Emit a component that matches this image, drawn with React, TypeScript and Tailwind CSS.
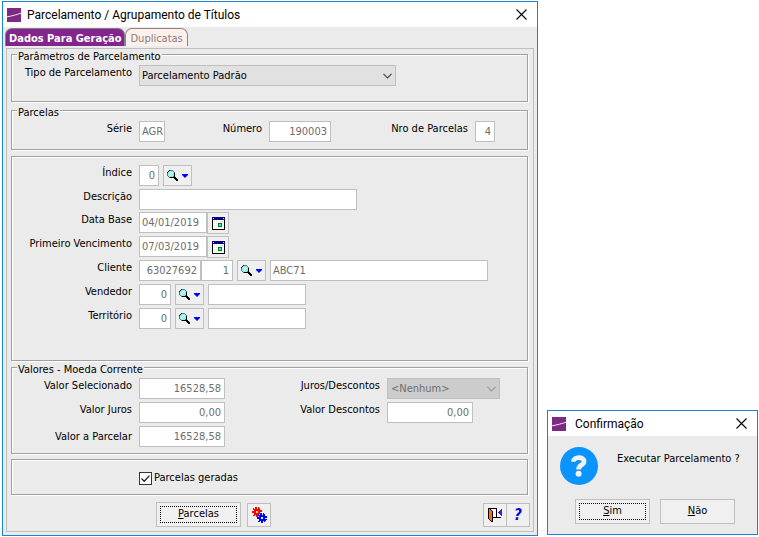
import type { ReactNode } from "react";

const FIELD = "h-[21px] border border-[#bfbfbf] bg-white text-[#6d6d6d] outline-none";
const TOOL_BUTTON = "flex items-center justify-center border border-[#bfbfbf] bg-[#f0f0f0]";

// Pixel maps for the small toolbar icons, one character per pixel
const PALETTE: Record<string, string> = {
  k: "#000000",
  c: "#8ff0f0",
  w: "#ffffff",
  g: "#4f8080",
  l: "#e4e4e4",
  n: "#000080",
  y: "#ffff00",
  b: "#0000ff",
  r: "#ff0000",
  o: "#ff6a13",
  v: "#4a14e8",
  d: "#008000",
  a: "#00ffff",
};

const MAGNIFIER = [
  "..kggg.....",
  ".kccccg....",
  "kcwcwccg...",
  "gccwcwck...",
  "gcwcwcck...",
  "gccwccck...",
  ".gccccgk...",
  "..gkkkkkk..",
  ".......kkk.",
  "........kkk",
  ".........kk",
];

const CALENDAR = [
  "nnnnnnnnnnnnn",
  "nynnnnnnnnnyn",
  "nnnnnnnnnnnnn",
  "kwwwwwwwwwwwk",
  "kwlwlwlwlwlwk",
  "kwwwwwwwwwwwk",
  "kwlwlwddddwwk",
  "kwwwwwdaadwwk",
  "kwlwlwdaadwwk",
  "kwwwwwddddwwk",
  "kwlwlwlwlwlwk",
  "kwwwwwwwwwwwk",
  "kkkkkkkkkkkkk",
];

const GEARS = [
  "...rr.r........",
  ".r.rr.rr.......",
  ".rrrrrrr.......",
  "..rrrrrrrr.....",
  "rrrryyrrrr.....",
  "rrrryyrr.......",
  "..rrrrrrbb.b...",
  "..rrrrb.bb.bb..",
  ".rr.rrbbbbbbb..",
  "....rr.bbbbbbbb",
  ".....bbbbyybbbb",
  ".....bbbbyybb..",
  ".......bbbbbbbb",
  ".......bbbbbbb.",
  "......bb.bb.b..",
  ".........bb....",
];

const DOOR = [
  "kkkkkkkkk.....",
  "kokwwwwwk....v",
  "kookwwwwk...vv",
  "koookwwwk..vvv",
  "koookwwwk.vvvv",
  "koookwwwk..vvv",
  "koookwwwk...vv",
  "koookwwwk....v",
  "koookwwwk.....",
  "koookkkkkkkkk.",
  "koook.........",
  ".kook.........",
  "..kok.........",
  "...kk.........",
];

function PixelIcon({ rows }: { rows: string[] }) {
  const width = rows[0].length;
  return (
    <svg width={width} height={rows.length} viewBox={`0 0 ${width} ${rows.length}`} shapeRendering="crispEdges" aria-hidden="true">
      {rows.flatMap((row, y) =>
        row.split("").map((ch, x) =>
          PALETTE[ch] ? <rect key={`${x}-${y}`} x={x} y={y} width="1" height="1" fill={PALETTE[ch]} /> : null
        )
      )}
    </svg>
  );
}

function Logo() {
  return (
    <svg width="14" height="14" viewBox="0 0 14 14" aria-hidden="true">
      <rect width="14" height="14" fill="#7d2a86" />
      <path d="M0 8.8 C5 8 10 6.6 14 5.2" stroke="#f3e4f5" strokeWidth="1" fill="none" />
    </svg>
  );
}

function TitleBar({ title, gap }: { title: string; gap: string }) {
  return (
    <header className={`flex h-[25px] items-center bg-white pl-1 pr-[10px] ${gap}`}>
      <Logo />
      <h1 className="flex-1 whitespace-nowrap font-[Roboto,'Open_Sans',sans-serif] text-[12px] leading-4 text-black">{title}</h1>
      <button type="button" aria-label="Fechar">
        <svg width="11" height="11" viewBox="0 0 11 11" fill="none" stroke="#000" strokeWidth="1.1">
          <path d="M0.5 0.5l10 10M10.5 0.5l-10 10" />
        </svg>
      </button>
    </header>
  );
}

function Group({ legend, className, children }: { legend?: string; className: string; children: ReactNode }) {
  return (
    <fieldset className={`min-w-0 border border-[#a0a0a0] shadow-[1px_1px_0_0_#fff,inset_1px_1px_0_0_#fff] ${className}`}>
      {legend && <legend className="ml-[5px] h-[11px] bg-[#ebebeb] px-px leading-[15px]">{legend}</legend>}
      {children}
    </fieldset>
  );
}

function Label({ id, width = "w-[120px]", children }: { id: string; width?: string; children: ReactNode }) {
  return (
    <label htmlFor={id} className={`mr-[7px] shrink-0 whitespace-nowrap text-right leading-[15px] ${width}`}>
      {children}
    </label>
  );
}

interface FieldProps {
  id?: string;
  value?: string;
  width: string;
  right?: boolean;
  label?: string;
}

function Field({ id, value = "", width, right, label }: FieldProps) {
  return (
    <input
      id={id}
      aria-label={label}
      defaultValue={value}
      readOnly
      className={`${FIELD} ${width} ${right ? "pr-[3px] text-right" : "pl-0.5"}`}
    />
  );
}

function SearchButton({ label }: { label: string }) {
  return (
    <button type="button" aria-label={label} className={`${TOOL_BUTTON} mx-1 h-[21px] w-[29px] shrink-0 gap-1`}>
      <PixelIcon rows={MAGNIFIER} />
      <svg width="6" height="4" viewBox="0 0 6 4" fill="#0000ff">
        <path d="M0 0h6v1L3 4L0 1z" />
      </svg>
    </button>
  );
}

function DateButton({ label }: { label: string }) {
  return (
    <button type="button" aria-label={label} className={`${TOOL_BUTTON} h-[22px] w-[22px] shrink-0`}>
      <PixelIcon rows={CALENDAR} />
    </button>
  );
}

interface ComboProps {
  id: string;
  option: string;
  width: string;
  disabled?: boolean;
}

function Combo({ id, option, width, disabled }: ComboProps) {
  return (
    <div className={`relative ${width}`}>
      <select
        id={id}
        disabled={disabled}
        className={`h-[21px] w-full appearance-none border border-[#bfbfbf] leading-[19px] opacity-100 ${
          disabled ? "bg-[#cccccc] px-[3px] text-[#6d6d6d]" : "bg-[#e1e1e1] px-0.5 text-black"
        }`}
      >
        <option>{option}</option>
      </select>
      <svg className="pointer-events-none absolute right-1 top-2" width="9" height="6" viewBox="0 0 9 6" fill="none" stroke={disabled ? "#9a9a9a" : "#444"} strokeWidth="1.2">
        <path d="M0.5 0.8l4 4l4-4" />
      </svg>
    </div>
  );
}

function PushButton({ hotkey, rest, focused, width }: { hotkey: string; rest: string; focused?: boolean; width: string }) {
  return (
    <button type="button" className={`h-[25px] border border-[#bfbfbf] bg-[#f0f0f0] p-[3px] text-black ${width}`}>
      <span className={`flex h-full items-center justify-center border border-dotted ${focused ? "border-black" : "border-transparent"}`}>
        <span>
          <u>{hotkey}</u>
          {rest}
        </span>
      </span>
    </button>
  );
}

function ParcelamentoWindow() {
  return (
    <section className="min-w-0 flex-1 border border-[#1883d7] bg-[#ebebeb]">
      <TitleBar title="Parcelamento / Agrupamento de Títulos" gap="gap-[6px]" />

      <div className="px-[3px] pb-[3px] pt-px">
        <div role="tablist" className="-ml-px flex h-5 items-start">
          <button type="button" role="tab" aria-selected="true" className="h-[18px] whitespace-nowrap rounded-t-[7px] border border-b-0 border-[#80808a] bg-[#84258d] px-[3px] font-bold leading-5 text-white">
            Dados Para Geração
          </button>
          <button type="button" role="tab" aria-selected="false" className="h-[18px] rounded-t-[7px] border border-b-0 border-[#8c8484] bg-[#fff0ec] px-1 leading-5 text-[#808080]">
            Duplicatas
          </button>
        </div>

        <div role="tabpanel" className="border border-[#bfbfbf] pb-1 pl-1 pr-[5px]">
          <Group legend="Parâmetros de Parcelamento" className="pb-[15px] pt-[5px]">
            <div className="flex items-start">
              <Label id="tipo">Tipo de Parcelamento</Label>
              <Combo id="tipo" option="Parcelamento Padrão" width="w-[257px]" />
            </div>
          </Group>

          <Group legend="Parcelas" className="mt-[3px] pb-[7px] pt-[5px]">
            <div className="flex items-start">
              <Label id="serie">Série</Label>
              <Field id="serie" value="AGR" width="w-[26px]" />
              <Label id="numero" width="w-[97px]">Número</Label>
              <Field id="numero" value="190003" width="w-[62px]" right />
              <Label id="parcelas" width="w-[137px]">Nro de Parcelas</Label>
              <Field id="parcelas" value="4" width="w-[20px]" right />
            </div>
          </Group>

          <Group className="mt-[6px] pb-[31px] pt-2">
            <div className="flex flex-col gap-[3px]">
              <div className="flex items-start">
                <Label id="indice">Índice</Label>
                <Field id="indice" value="0" width="w-[20px]" right />
                <SearchButton label="Pesquisar índice" />
              </div>
              <div className="flex items-start">
                <Label id="descricao">Descrição</Label>
                <Field id="descricao" width="w-[218px]" />
              </div>
              <div className="-mt-px flex items-start">
                <Label id="data-base">Data Base</Label>
                <Field id="data-base" value="04/01/2019" width="w-[68px]" />
                <DateButton label="Escolher data base" />
              </div>
              <div className="-mt-px flex items-start">
                <Label id="vencimento">Primeiro Vencimento</Label>
                <Field id="vencimento" value="07/03/2019" width="w-[68px]" />
                <DateButton label="Escolher primeiro vencimento" />
              </div>
              <div className="-mt-px flex items-start">
                <Label id="cliente">Cliente</Label>
                <Field id="cliente" value="63027692" width="w-[62px]" right />
                <Field label="Filial do cliente" value="1" width="w-[32px]" right />
                <SearchButton label="Pesquisar cliente" />
                <Field label="Nome do cliente" value="ABC71" width="w-[218px]" />
              </div>
              <div className="flex items-start">
                <Label id="vendedor">Vendedor</Label>
                <Field id="vendedor" value="0" width="w-[32px]" right />
                <SearchButton label="Pesquisar vendedor" />
                <Field label="Nome do vendedor" width="w-[98px]" />
              </div>
              <div className="flex items-start">
                <Label id="territorio">Território</Label>
                <Field id="territorio" value="0" width="w-[32px]" right />
                <SearchButton label="Pesquisar território" />
                <Field label="Nome do território" width="w-[98px]" />
              </div>
            </div>
          </Group>

          <Group legend="Valores - Moeda Corrente" className="mt-px pb-[6px] pt-[5px]">
            <div className="flex flex-col gap-[3px]">
              <div className="flex items-start">
                <Label id="selecionado">Valor Selecionado</Label>
                <Field id="selecionado" value="16528,58" width="w-[86px]" right />
                <Label id="juros-descontos" width="w-[155px]">Juros/Descontos</Label>
                <Combo id="juros-descontos" option="<Nenhum>" width="w-[113px]" disabled />
              </div>
              <div className="flex items-start">
                <Label id="juros">Valor Juros</Label>
                <Field id="juros" value="0,00" width="w-[86px]" right />
                <Label id="descontos" width="w-[155px]">Valor Descontos</Label>
                <Field id="descontos" value="0,00" width="w-[86px]" right />
              </div>
              <div className="flex items-center">
                <Label id="a-parcelar">Valor a Parcelar</Label>
                <Field id="a-parcelar" value="16528,58" width="w-[86px]" right />
              </div>
            </div>
          </Group>

          <Group className="mt-[5px] pb-[9px] pt-3">
            <label className="ml-[127px] flex h-[13px] items-center gap-[2px]">
              <span className="relative flex">
                <input type="checkbox" defaultChecked className="peer h-[13px] w-[13px] appearance-none border border-[#333] bg-white" />
                <svg className="pointer-events-none invisible absolute inset-0 peer-checked:visible" width="13" height="13" viewBox="0 0 13 13" fill="none" stroke="#222" strokeWidth="1.3">
                  <path d="M2.5 6.5l2.7 2.7l5.3-5.6" />
                </svg>
              </span>
              Parcelas geradas
            </label>
          </Group>

          <div className="flex items-start pl-[145px] pt-[7px]">
            <PushButton hotkey="P" rest="arcelas" width="w-[85px]" focused />
            <button type="button" aria-label="Configurar" className={`${TOOL_BUTTON} ml-[6px] mr-auto mt-px h-6 w-6`}>
              <PixelIcon rows={GEARS} />
            </button>
            <button type="button" aria-label="Sair" className={`${TOOL_BUTTON} mt-px h-6 w-6`}>
              <PixelIcon rows={DOOR} />
            </button>
            <button type="button" aria-label="Ajuda" className={`${TOOL_BUTTON} -ml-px -mr-[2px] mt-px h-6 w-6 font-['DejaVu_Sans_Condensed','DejaVu_Sans',sans-serif] text-[15px] font-bold italic text-[#0000e0]`}>
              ?
            </button>
          </div>
        </div>
      </div>
    </section>
  );
}

function ConfirmDialog() {
  return (
    <section role="dialog" aria-label="Confirmação" className="mb-px w-[211px] shrink-0 border border-[#1883d7] bg-[#ebebeb]">
      <TitleBar title="Confirmação" gap="gap-[9px]" />
      <div className="flex items-start gap-[19px] pl-3 pt-[11px]">
        <svg width="38" height="38" viewBox="0 0 38 38" aria-hidden="true">
          <circle cx="19" cy="19" r="19" fill="#0a94ff" />
          <path d="M13.4 14.8 C13.4 9.4 24 9.2 24 14.6 C24 18.6 18.6 17.6 18.6 22.4" fill="none" stroke="#f2f2f2" strokeWidth="4.8" />
          <circle cx="18.6" cy="26.8" r="3" fill="#f2f2f2" />
        </svg>
        <p className="whitespace-nowrap pt-1 leading-[15px]">Executar Parcelamento ?</p>
      </div>
      <div className="flex justify-end gap-[10px] pb-[10px] pr-[22px] pt-[14px]">
        <PushButton hotkey="S" rest="im" width="w-[75px]" focused />
        <PushButton hotkey="N" rest="ão" width="w-[75px]" />
      </div>
    </section>
  );
}

export default function App() {
  return (
    <main className="flex items-end gap-[9px] bg-white pl-0.5 pr-px pt-px font-['DejaVu_Sans_Condensed','DejaVu_Sans',sans-serif] text-[11px] text-black">
      <ParcelamentoWindow />
      <ConfirmDialog />
    </main>
  );
}
